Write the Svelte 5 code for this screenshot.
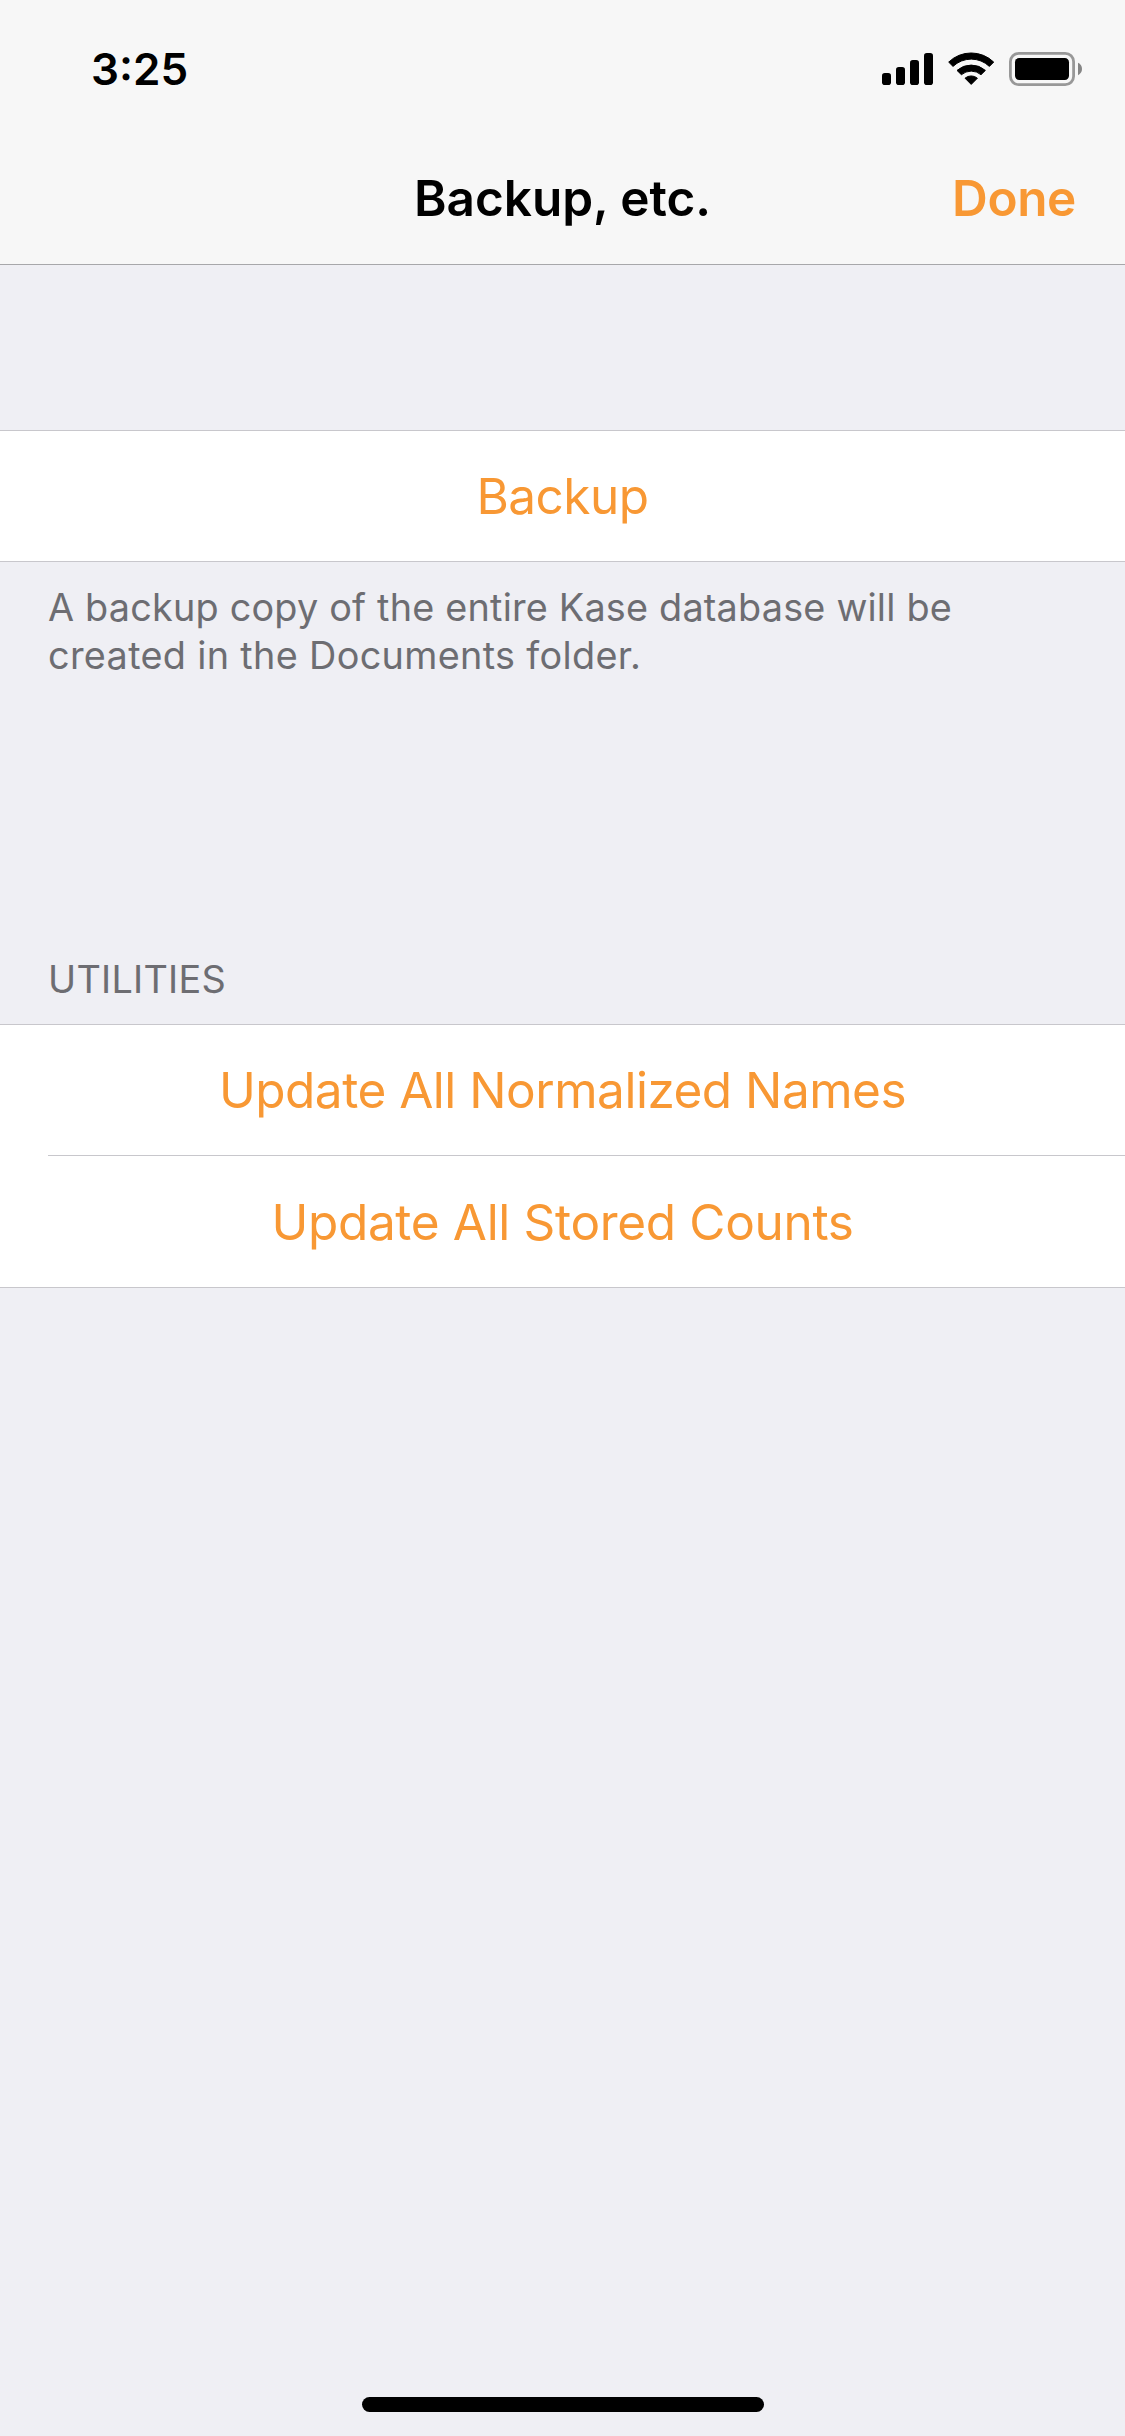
<script>
  const footer = [
    { text: 'A backup copy of the entire Kase database will be', cls: 'first' },
    { text: 'created in the Documents folder.', cls: 'second' }
  ];
</script>

<div class="screen">
  <header class="top">
    <div class="status">
      <span class="time">3:25</span>
      <svg class="indicators" width="204" height="40" viewBox="880 49 204 40" aria-hidden="true">
        <!-- cellular signal -->
        <rect x="882" y="73" width="9" height="12" rx="2.8" />
        <rect x="896" y="67" width="9" height="18" rx="2.8" />
        <rect x="910" y="60" width="9" height="25" rx="2.8" />
        <rect x="924" y="53" width="9" height="32" rx="2.8" />
        <!-- wifi -->
        <g stroke="#000" stroke-width="1" stroke-linejoin="round">
          <path d="M948.7 62.1A32.3 32.3 0 0 1 993.7 62.1L989.4 66.4A26.4 26.4 0 0 0 953 66.4Z" />
          <path d="M957 70.4A21.6 21.6 0 0 1 985.4 70.4L981 74.7A15.2 15.2 0 0 0 961.4 74.7Z" />
          <path d="M965 78.2A9.6 9.6 0 0 1 977.4 78.2L971.2 84.4Z" />
        </g>
        <!-- battery -->
        <rect x="1010.4" y="53.4" width="63.2" height="31.2" rx="8.4" fill="none" stroke="#989898" stroke-width="2.8" />
        <rect x="1015" y="58" width="54" height="22" rx="4.2" />
        <path d="M1078 62.8C1080.6 64 1082 66.4 1082 69S1080.6 74 1078 75.2Z" fill="#858585" />
      </svg>
    </div>
    <div class="nav">
      <h1>Backup, etc.</h1>
      <button class="done">Done</button>
    </div>
  </header>

  <main>
    <section class="group">
      <button class="row backup">Backup</button>
    </section>
    <p class="footnote">
      {#each footer as line}
        <span class={line.cls}>{line.text}</span>
      {/each}
    </p>

    <h2>UTILITIES</h2>
    <section class="group">
      <button class="row names">Update All Normalized Names</button>
      <hr />
      <button class="row counts">Update All Stored Counts</button>
    </section>
  </main>

  <div class="home"></div>
</div>

<style>
  :global(body) {
    margin: 0;
    background: #efeff4;
  }
  .screen {
    width: 1125px;
    height: 2436px;
    box-sizing: border-box;
    display: flex;
    flex-direction: column;
    background: #efeff4;
    font-family: Inter, "Liberation Sans", sans-serif;
    overflow: hidden;
  }
  button {
    border: 0;
    margin: 0;
    padding: 0;
    background: none;
    font-family: inherit;
    color: #f89834;
  }
  .top {
    background: #f7f7f7;
    border-bottom: 1px solid #a7a7aa;
  }
  .status {
    height: 132px;
    box-sizing: border-box;
    padding: 6px 41px 0 91px;
    display: flex;
    justify-content: space-between;
    align-items: center;
  }
  .time {
    font-size: 44px;
    font-weight: 600;
    letter-spacing: 0;
    color: #000;
  }
  .nav {
    height: 132px;
    display: grid;
    grid-template-columns: 1fr auto 1fr;
    align-items: center;
    padding: 0 49px;
  }
  h1 {
    grid-column: 2;
    margin: 0;
    font-size: 49.5px;
    font-weight: 600;
    letter-spacing: -0.04px;
    color: #000;
  }
  .done {
    justify-self: end;
    font-size: 49.5px;
    font-weight: 600;
    letter-spacing: -0.39px;
  }
  main {
    flex: 1;
    padding-top: 165px;
  }
  .group {
    background: #fff;
    border-top: 1px solid #c8c7cc;
    border-bottom: 1px solid #c8c7cc;
  }
  .row {
    display: flex;
    align-items: center;
    justify-content: center;
    width: 100%;
    height: 130px;
    font-size: 49.5px;
    font-weight: 400;
  }
  .backup {
    letter-spacing: -0.5px;
  }
  .names {
    letter-spacing: -0.49px;
  }
  .counts {
    height: 131px;
    padding-top: 1px;
    letter-spacing: -0.33px;
  }
  hr {
    height: 1px;
    border: 0;
    margin: 0 0 0 48px;
    background: #c8c7cc;
  }
  .footnote,
  h2 {
    margin: 0;
    font-size: 37.8px;
    font-weight: 400;
    line-height: 48px;
    color: #6d6d72;
  }
  .footnote {
    padding: 21px 48px 0;
    height: 372px;
  }
  .footnote span {
    display: block;
    white-space: nowrap;
  }
  .first {
    letter-spacing: 0.2px;
  }
  .second {
    letter-spacing: 0.329px;
  }
  h2 {
    padding: 0 48px 21px;
    letter-spacing: 0.25px;
  }
  .home {
    align-self: center;
    width: 402px;
    height: 15px;
    margin-bottom: 24px;
    border-radius: 8px;
    background: #000;
  }
</style>
